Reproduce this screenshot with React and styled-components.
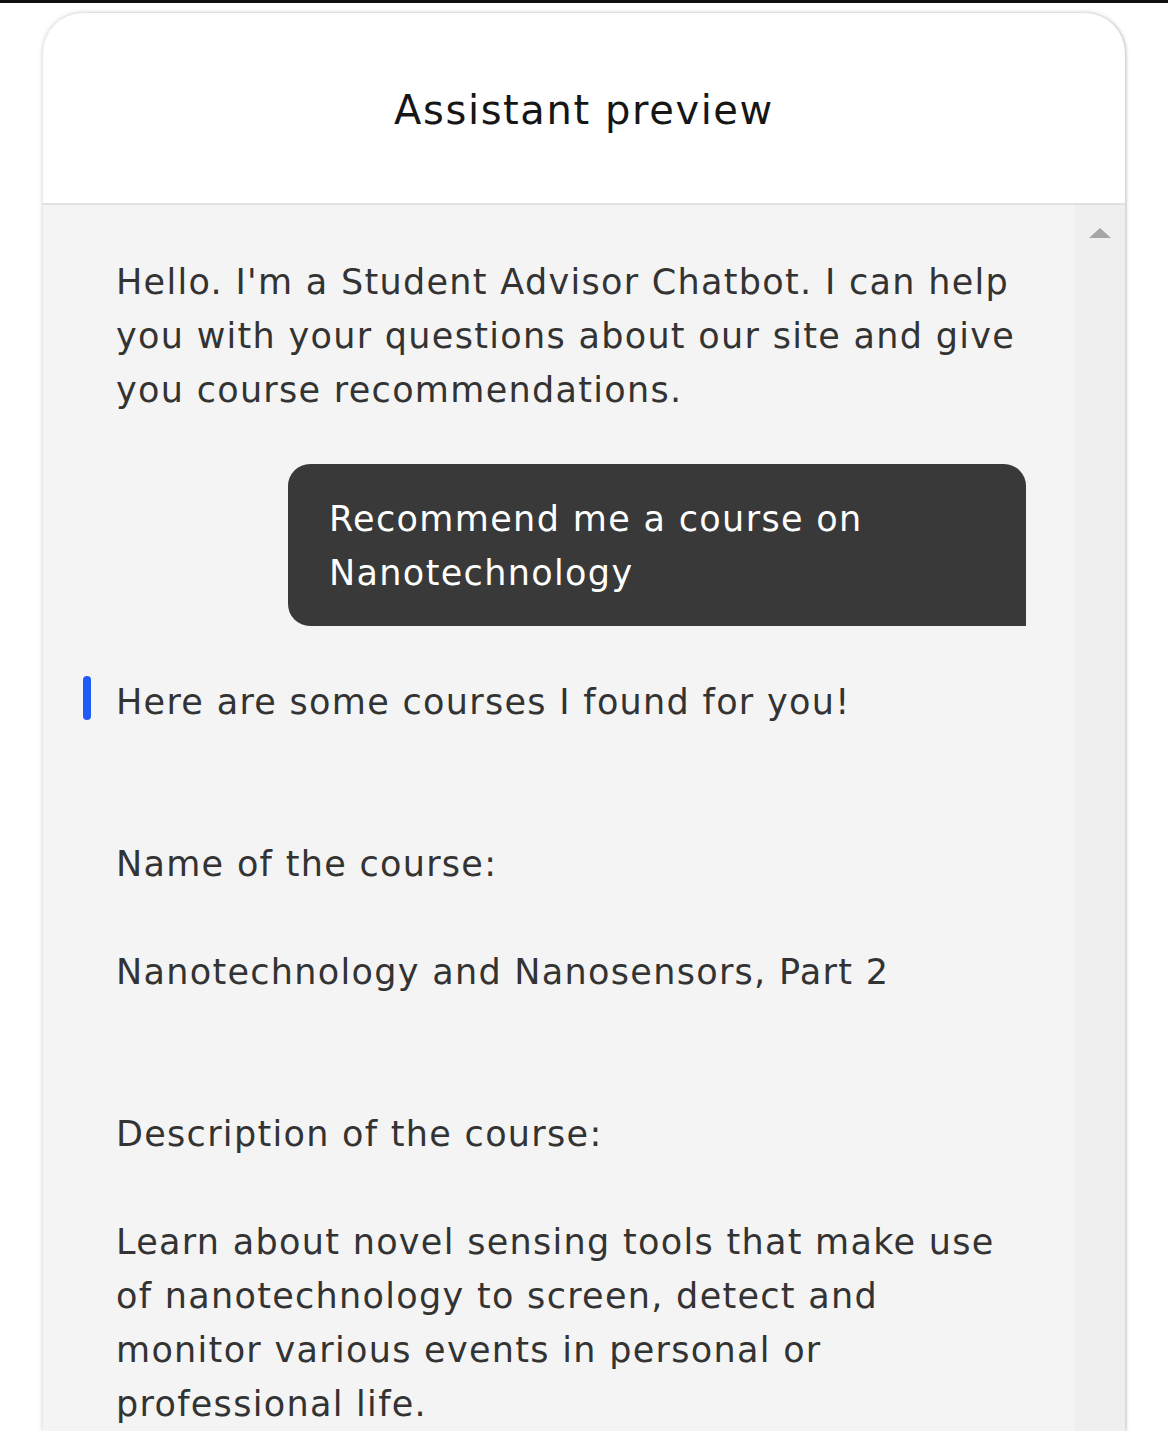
import styled, { createGlobalStyle } from "styled-components";

const GlobalStyle = createGlobalStyle`
  html, body {
    margin: 0;
    padding: 0;
    background: #ffffff;
    font-family: "DejaVu Sans", "Noto Sans", sans-serif;
  }
`;

const greeting = "Hello. I'm a Student Advisor Chatbot. I can help\nyou with your questions about our site and give\nyou course recommendations.";

const answer = [
  "Here are some courses I found for you!",
  "",
  "",
  "Name of the course:",
  "",
  "Nanotechnology and Nanosensors, Part 2",
  "",
  "",
  "Description of the course:",
  "",
  "Learn about novel sensing tools that make use",
  "of nanotechnology to screen, detect and",
  "monitor various events in personal or",
  "professional life.",
].join("\n");

const App = () => {
  return (
    <Page>
      <GlobalStyle />
      <TopLine />
      <Stage>
        <Card>
          <Header>
            <Title>Assistant preview</Title>
          </Header>
          <Body>
            <Messages>
              <BotText>{greeting}</BotText>
              <UserRow>
                <Bubble>{"Recommend me a course on\nNanotechnology"}</Bubble>
              </UserRow>
              <BotText $focused>{answer}</BotText>
            </Messages>
            <Scrollbar>
              <ArrowUp />
            </Scrollbar>
          </Body>
        </Card>
      </Stage>
    </Page>
  );
};

export default App;

const Page = styled.div`
  height: 1431px;
  display: flex;
  flex-direction: column;
  overflow: hidden;
`;

const TopLine = styled.div`
  height: 3px;
  background: #111111;
  flex-shrink: 0;
`;

const Stage = styled.div`
  flex: 1;
  display: flex;
  padding: 10px 43px 0 43px;
  min-height: 0;
`;

const Card = styled.div`
  flex: 1;
  display: flex;
  flex-direction: column;
  border-radius: 40px 40px 0 0;
  background: #ffffff;
  box-shadow: 0 0 5px rgba(0, 0, 0, 0.22), 2px 0 2px rgba(0, 0, 0, 0.08);
  overflow: hidden;
`;

const Header = styled.div`
  height: 192px;
  box-sizing: border-box;
  padding-top: 4px;
  flex-shrink: 0;
  display: flex;
  align-items: center;
  justify-content: center;
  border-bottom: 2px solid #e0e0e0;
`;

const Title = styled.h1`
  margin: 0;
  font-size: 40px;
  font-weight: 400;
  color: #161616;
  letter-spacing: 1.6px;
`;

const Body = styled.div`
  flex: 1;
  display: grid;
  grid-template-columns: 1fr 51px;
  min-height: 0;
`;

const Messages = styled.div`
  background: #f4f4f4;
  padding: 50px 48px 0 73px;
  display: flex;
  flex-direction: column;
`;

const BotText = styled.div`
  position: relative;
  font-size: 35px;
  line-height: 54px;
  color: #333333;
  letter-spacing: 1.3px;
  white-space: pre-line;

  &::before {
    content: "";
    display: ${(p) => (p.$focused ? "block" : "none")};
    position: absolute;
    left: -33px;
    top: 1px;
    width: 8px;
    height: 44px;
    border-radius: 4px;
    background: #1f5cf5;
  }
`;

const UserRow = styled.div`
  display: flex;
  justify-content: flex-end;
  margin: 47px 0 49px;
`;

const Bubble = styled.div`
  width: 738px;
  box-sizing: border-box;
  padding: 28px 41px 26px;
  background: #393939;
  color: #ffffff;
  font-size: 35px;
  line-height: 54px;
  letter-spacing: 1.35px;
  border-radius: 22px 22px 0 22px;
  white-space: pre-line;
`;

const Scrollbar = styled.div`
  background: #efefef;
  display: flex;
  justify-content: center;
  padding-top: 23px;
`;

const ArrowUp = styled.div`
  width: 0;
  height: 0;
  border-left: 11px solid transparent;
  border-right: 11px solid transparent;
  border-bottom: 10px solid #a6a6a6;
`;
